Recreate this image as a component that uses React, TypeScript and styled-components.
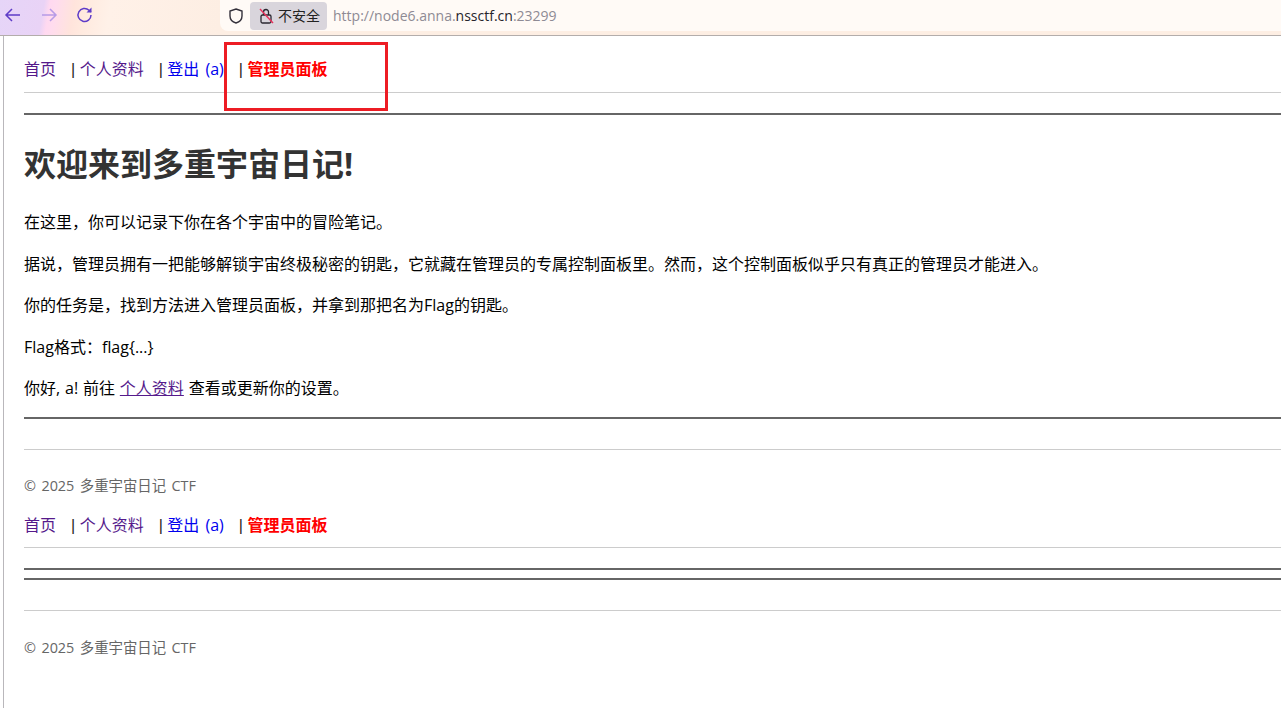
import * as React from "react";
import styled, { createGlobalStyle } from "styled-components";

const GlobalStyle = createGlobalStyle`
  html, body {
    margin: 0;
    padding: 0;
    background: #fff;
    overflow: hidden;
  }
  body {
    font-family: "Open Sans", "Noto Sans CJK SC", sans-serif;
    font-size: 16px;
    line-height: 25.6px;
    word-spacing: 0.7px;
    color: #000;
  }
`;

const Shell = styled.div`
  position: relative;
  width: 1281px;
  height: 708px;
  overflow: hidden;
`;

const Toolbar = styled.div`
  display: flex;
  align-items: flex-start;
  height: 35px;
  border-bottom: 1px solid #b3adab;
  background: linear-gradient(100deg, #e6d5f8 0, #e9d3f6 44px, #ffd9f0 50px, #ffdcee 56px, #ffe4dc 74px, #ffeadf 86px, #fff1e8 110px, #fdeee3 220px);
`;

const NavButtons = styled.div`
  display: flex;
  align-items: center;
  gap: 12px;
  width: 220px;
  height: 29px;
  padding-left: 1px;
  box-sizing: border-box;
`;

const NavIcon = styled.svg<{ $faded?: boolean }>`
  width: 24px;
  height: 24px;
  fill: none;
  stroke: ${(p) => (p.$faded ? "#b79be6" : "#5f3cc8")};
  stroke-width: 1.5;
`;

const AddressBar = styled.div`
  flex: 1;
  display: flex;
  align-items: center;
  height: 31px;
  background: #fffaf6;
  border-radius: 0 0 0 8px;
  padding-left: 7px;
`;

const ShieldIcon = styled.svg`
  width: 18px;
  height: 18px;
  fill: none;
  stroke: #33303a;
  stroke-width: 1.4;
  margin-right: 5px;
`;

const SecurityChip = styled.div`
  display: flex;
  align-items: center;
  gap: 3px;
  height: 28px;
  padding: 0 7px 0 8px;
  border-radius: 4px;
  background: #d9d5dc;
  font-family: "Noto Sans CJK SC", sans-serif;
  font-size: 14px;
  color: #222;
`;

const LockIcon = styled.svg`
  width: 17px;
  height: 18px;
  fill: none;
`;

const Url = styled.div`
  margin-left: 6px;
  font-family: "Open Sans", sans-serif;
  font-size: 14px;
  color: #8e8a94;
  word-spacing: 0;
`;

const UrlHost = styled.span`
  color: #26242b;
`;

const Page = styled.main`
  height: 672px;
  margin-left: 3px;
  border-left: 1px solid #b9b7bb;
  padding: 21px 0 0 20px;
  box-sizing: border-box;
`;

const Nav = styled.nav<{ $tight?: boolean }>`
  display: flex;
  align-items: center;
  height: 25px;
  padding-bottom: ${(p) => (p.$tight ? 9 : 10)}px;
  border-bottom: 1px solid #ccc;
`;

const NavLink = styled.a<{ $color: string; $bold?: boolean }>`
  color: ${(p) => p.$color};
  font-weight: ${(p) => (p.$bold ? 700 : 400)};
  margin-right: 15px;
  word-spacing: 2px;
  text-decoration: none;
`;

const Separator = styled.span`
  font-family: "Liberation Sans", sans-serif;
  color: #2a2320;
  margin-right: 4.5px;
`;

const Rule = styled.hr<{ $top?: number }>`
  height: 2px;
  margin: ${(p) => p.$top ?? 0}px 0 0;
  border: 0;
  background: #666;
`;

const Title = styled.h1`
  margin: 27px 0 24px;
  font-size: 32px;
  line-height: 44px;
  font-weight: 700;
  color: #333;
`;

const Paragraph = styled.p`
  margin: 16px 0 0;
`;

const InlineLink = styled.a`
  color: #551a8b;
  text-decoration: underline;
`;

const FooterBlock = styled.footer<{ $tall?: boolean }>`
  margin-top: 30px;
  border-top: 1px solid #ccc;
  padding-top: ${(p) => (p.$tall ? 26 : 25)}px;
  font-size: 14.4px;
  line-height: 22px;
  word-spacing: 1.7px;
  color: #666;
`;

const Highlight = styled.div`
  position: absolute;
  left: 224px;
  top: 42px;
  width: 158px;
  height: 63px;
  border: 3px solid #ed1c24;
`;

const SecondNav = styled.div`
  margin-top: 16px;
`;

function TopNav({ tight }: { tight?: boolean }) {
  return (
    <Nav $tight={tight}>
      <NavLink href="#" $color="#551a8b">首页</NavLink>
      <Separator>|</Separator>
      <NavLink href="#" $color="#551a8b">个人资料</NavLink>
      <Separator>|</Separator>
      <NavLink href="#" $color="#0000ee">登出 (a)</NavLink>
      <Separator>|</Separator>
      <NavLink href="#" $color="#ff0000" $bold>管理员面板</NavLink>
    </Nav>
  );
}

export default function App() {
  return (
    <Shell>
      <GlobalStyle />
      <Toolbar>
        <NavButtons>
          <NavIcon viewBox="0 0 24 24">
            <path d="M19 12H5M11 6l-6 6 6 6" />
          </NavIcon>
          <NavIcon viewBox="0 0 24 24" $faded>
            <path d="M5 12h14M13 6l6 6-6 6" />
          </NavIcon>
          <NavIcon viewBox="0 0 24 24">
            <path d="M18 12a6.500 6.500 0 1 1-2-4.700L18 9" />
            <path d="M18.500 4.500V9.500H13.500" fill="#5f3cc8" stroke="none" />
          </NavIcon>
        </NavButtons>
        <AddressBar>
          <ShieldIcon viewBox="0 0 18 18">
            <path d="M9 2l6 2v5c0 3.500-2.500 6-6 7-3.500-1-6-3.500-6-7V4z" />
          </ShieldIcon>
          <SecurityChip>
            <LockIcon viewBox="0 0 17 18">
              <rect x="3" y="8" width="10" height="8" rx="1.500" stroke="#2a2730" strokeWidth="1.300" />
              <path d="M5.500 8V5a2.500 2.500 0 0 1 5 0v3" stroke="#2a2730" strokeWidth="1.300" />
              <path d="M2 2l13 14" stroke="#e8315b" strokeWidth="1.400" />
            </LockIcon>
            不安全
          </SecurityChip>
          <Url>
            http://node6.anna.<UrlHost>nssctf.cn</UrlHost>:23299
          </Url>
        </AddressBar>
      </Toolbar>
      <Page>
        <TopNav />
        <Rule $top={20} />
        <Title>欢迎来到多重宇宙日记!</Title>
        <Paragraph>在这里，你可以记录下你在各个宇宙中的冒险笔记。</Paragraph>
        <Paragraph>据说，管理员拥有一把能够解锁宇宙终极秘密的钥匙，它就藏在管理员的专属控制面板里。然而，这个控制面板似乎只有真正的管理员才能进入。</Paragraph>
        <Paragraph>你的任务是，找到方法进入管理员面板，并拿到那把名为Flag的钥匙。</Paragraph>
        <Paragraph>Flag格式：flag{"{...}"}</Paragraph>
        <Paragraph>
          你好, a! 前往 <InlineLink href="#">个人资料</InlineLink> 查看或更新你的设置。
        </Paragraph>
        <Rule $top={15} />
        <FooterBlock>© 2025 多重宇宙日记 CTF</FooterBlock>
        <SecondNav>
          <TopNav tight />
        </SecondNav>
        <Rule $top={20} />
        <Rule $top={8} />
        <FooterBlock $tall>© 2025 多重宇宙日记 CTF</FooterBlock>
      </Page>
      <Highlight />
    </Shell>
  );
}
